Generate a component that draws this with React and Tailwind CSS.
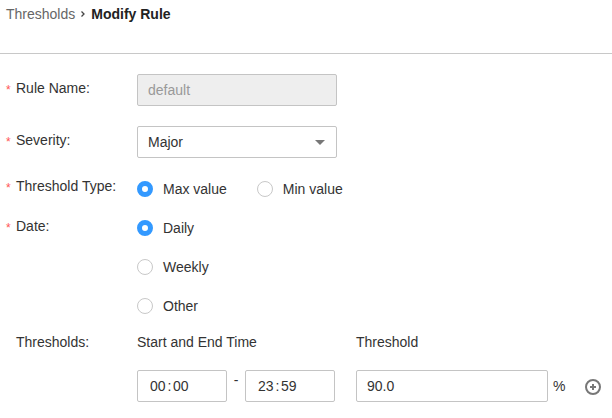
import { useState } from "react";

const boxClass =
  "h-8 rounded-xs border border-[#c4c4c4] bg-white outline-none focus-within:border-[#3399ff]";

function FieldName({ children, htmlFor, id, required = true }) {
  const Tag = htmlFor ? "label" : "span";
  return (
    <Tag htmlFor={htmlFor} id={id} className="flex w-[131px] shrink-0">
      <span aria-hidden={!required} className="w-[10px] pt-1 text-xs text-[#f55]">
        {required ? "*" : ""}
      </span>
      <span>{children}</span>
    </Tag>
  );
}

function Radio({ name, value, label, selected, onSelect }) {
  return (
    <label className="flex items-center gap-[10px]">
      <input
        type="radio"
        name={name}
        value={value}
        checked={selected === value}
        onChange={() => onSelect(value)}
        className="size-4 appearance-none rounded-full border border-[#c8c8c8] bg-white checked:border-5 checked:border-[#3399ff]"
      />
      {label}
    </label>
  );
}

function TimeBox({ label, time }) {
  const [hour, minute] = time.split(":");
  return (
    <div role="group" aria-label={label} className={`flex w-[90px] items-center pl-3 ${boxClass}`}>
      <input aria-label={`${label} hour`} defaultValue={hour} maxLength={2} className="w-4 outline-none" />
      <span className="w-[7px] text-center">:</span>
      <input aria-label={`${label} minute`} defaultValue={minute} maxLength={2} className="w-4 outline-none" />
    </div>
  );
}

export default function App() {
  const [type, setType] = useState("max");
  const [date, setDate] = useState("daily");

  return (
    <div className="bg-white font-['Liberation_Sans',Arial,sans-serif] text-sm text-[#333]">
      <header className="border-b border-[#c8c8c8] px-[6px] pt-1 pb-[29px]">
        <nav aria-label="Breadcrumb" className="flex items-center">
          <a href="#thresholds" className="text-[#666]">
            Thresholds
          </a>
          <svg viewBox="0 0 4 6" className="mx-[6px] h-[6px] w-1" fill="none" stroke="#444" strokeWidth="1.3" aria-hidden="true">
            <path d="M0.5 0.5 3 3 0.5 5.5" />
          </svg>
          <h1 className="font-bold text-[#222]">Modify Rule</h1>
        </nav>
      </header>

      <form className="px-[6px] pt-5 pb-4">
        <div className="mb-5 flex">
          <div className="pt-1">
            <FieldName htmlFor="rule-name">Rule Name:</FieldName>
          </div>
          <input
            id="rule-name"
            disabled
            defaultValue="default"
            className="h-8 w-[200px] rounded-xs border border-[#c4c4c4] bg-[#eee] px-[10px] text-[#999]"
          />
        </div>

        <div className="mb-[18px] flex">
          <div className="pt-1">
            <FieldName htmlFor="severity">Severity:</FieldName>
          </div>
          <div className="relative w-[200px]">
            <select id="severity" defaultValue="Major" className={`w-full appearance-none px-[10px] ${boxClass}`}>
              <option>Critical</option>
              <option>Major</option>
              <option>Minor</option>
              <option>Warning</option>
            </select>
            <svg viewBox="0 0 10 5" className="pointer-events-none absolute top-[14px] right-3 h-[5px] w-[10px]" fill="#777" aria-hidden="true">
              <path d="M0 0h10L5 5z" />
            </svg>
          </div>
        </div>

        <div role="radiogroup" aria-labelledby="type-name" className="mb-[17px] flex">
          <FieldName id="type-name">Threshold Type:</FieldName>
          <div className="flex gap-[30px] pt-[3px]">
            <Radio name="type" value="max" label="Max value" selected={type} onSelect={setType} />
            <Radio name="type" value="min" label="Min value" selected={type} onSelect={setType} />
          </div>
        </div>

        <div role="radiogroup" aria-labelledby="date-name" className="mb-4 flex">
          <FieldName id="date-name">Date:</FieldName>
          <div className="flex flex-col gap-[19px] pt-[2px]">
            <Radio name="date" value="daily" label="Daily" selected={date} onSelect={setDate} />
            <Radio name="date" value="weekly" label="Weekly" selected={date} onSelect={setDate} />
            <Radio name="date" value="other" label="Other" selected={date} onSelect={setDate} />
          </div>
        </div>

        <div className="flex">
          <FieldName id="thresholds-name" required={false}>
            Thresholds:
          </FieldName>
          <div role="group" aria-labelledby="thresholds-name" className="flex flex-1">
            <div className="w-[219px] shrink-0">
              <div>Start and End Time</div>
              <div className="mt-[18px] flex">
                <TimeBox label="Start time" time="00:00" />
                <span className="w-[18px] text-center">-</span>
                <TimeBox label="End time" time="23:59" />
              </div>
            </div>
            <div className="min-w-0 flex-1">
              <label htmlFor="threshold">Threshold</label>
              <div className="mt-[18px] flex items-center">
                <input id="threshold" defaultValue="90.0" className={`w-48 px-[10px] ${boxClass}`} />
                <span className="ml-[5px]">%</span>
                <button type="button" aria-label="Add threshold" className="ml-5 shrink-0 pt-[2px]">
                  <svg viewBox="0 0 16 16" className="size-4" fill="none" stroke="#777" strokeWidth="2">
                    <circle cx="8" cy="8" r="7" />
                    <path d="M8 5v6M5 8h6" />
                  </svg>
                </button>
              </div>
            </div>
          </div>
        </div>
      </form>
    </div>
  );
}
